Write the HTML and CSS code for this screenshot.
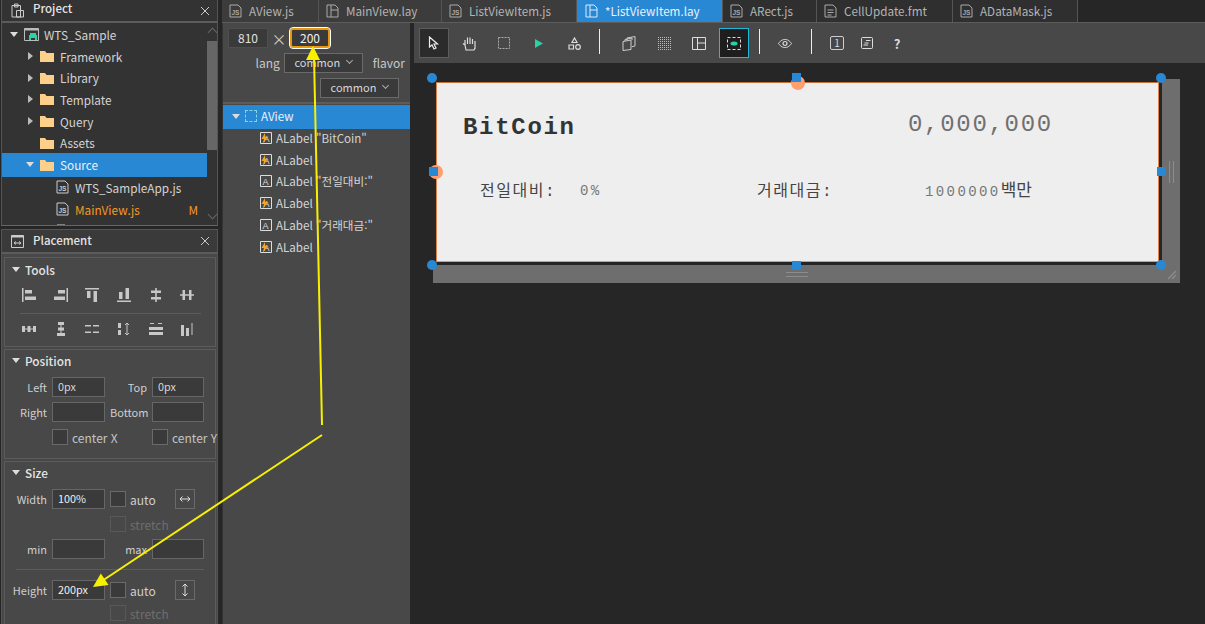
FILE: index.html
```html
<!DOCTYPE html>
<html lang="ko">
<head>
<meta charset="UTF-8">
<meta name="viewport" content="width=device-width, initial-scale=1.0">
<title>ListViewItem.lay</title>
<link rel="stylesheet" href="styles.css">
</head>
<body>
<svg class="defs" width="0" height="0">
    <symbol id="i-folder" viewBox="0 0 14 12"><path d="M0 1h5l1.500 2H14v9H0z" fill="#fcd08a"/></symbol>
    <symbol id="i-file" viewBox="0 0 13 14"><path d="M1 1h8l3 3v9H1z" fill="none" stroke="currentColor"/></symbol>
    <symbol id="i-lay" viewBox="0 0 13 14"><path d="M1 1h8l3 3v9H1zM5 1v12M5 6h7" fill="none" stroke="currentColor"/></symbol>
    <symbol id="i-fmt" viewBox="0 0 13 14"><path d="M1 1h8l3 3v9H1zM3.500 6h6M3.500 8.500h6M3.500 11h4" fill="none" stroke="currentColor"/></symbol>
    <symbol id="i-box" viewBox="0 0 12 12"><path d="M.5.500h11v11H.5z" fill="none" stroke="#ddd"/></symbol>
    <symbol id="i-bolt" viewBox="0 0 12 12"><path d="M5 1 1.500 7h2.500l-1 4.500L8 5H5.200z" fill="#f5a623"/></symbol>
    <symbol id="i-align" viewBox="0 0 14 14">
        <path d="M0 0h1.500v14H0zM3 2h7v3.500H3zM3 8.500h11V12H3z" fill="#c8c8c8"/>
    </symbol>
    <symbol id="i-mid" viewBox="0 0 14 14">
        <path d="M6.200 0h1.600v14H6.200zM2 2.500h10v2.500H2zM2 9h10v2.500H2z" fill="#c8c8c8"/>
    </symbol>
    <pattern id="dots" width="2" height="2" patternUnits="userSpaceOnUse"><rect width="1" height="1" fill="#bbb"/></pattern>
</svg>

<div class="app">
    <aside class="side">
        <section class="panel project">
            <header class="panel-head">
                <svg class="head-icon" width="13" height="15" viewBox="0 0 13 15"><path d="M1 2.500h8.500V14H1zM3.500 1h3.500v3H3.500zM5.500 7.500h7V14h-7z" fill="#333" stroke="#ccc"/></svg>
                <span class="panel-title">Project</span>
                <svg class="close" width="10" height="10" viewBox="0 0 10 10"><path d="M1 1l8 8M9 1l-8 8" stroke="#ccc"/></svg>
            </header>
            <div class="tree-wrap">
                <ul class="tree">
                    <li class="node">
                        <i class="tri open"></i>
                        <svg class="node-icon" width="15" height="13" viewBox="0 0 15 13"><path d="M.5.500h14v12H.5z" fill="none" stroke="#bbb"/><path d="M.5.500h14v2H.5z" fill="#bbb"/><path d="M5 12V7h1V5h6v2h1v5h-2v-2H7v2z" fill="#2dcfa5"/></svg>
                        WTS_Sample
                    </li>
                    <li class="node lvl1"><i class="tri closed"></i><svg class="node-icon" width="14" height="12"><use href="#i-folder"/></svg>Framework</li>
                    <li class="node lvl1"><i class="tri closed"></i><svg class="node-icon" width="14" height="12"><use href="#i-folder"/></svg>Library</li>
                    <li class="node lvl1"><i class="tri closed"></i><svg class="node-icon" width="14" height="12"><use href="#i-folder"/></svg>Template</li>
                    <li class="node lvl1"><i class="tri closed"></i><svg class="node-icon" width="14" height="12"><use href="#i-folder"/></svg>Query</li>
                    <li class="node lvl1"><i class="tri none"></i><svg class="node-icon" width="14" height="12"><use href="#i-folder"/></svg>Assets</li>
                    <li class="node lvl1 selected"><i class="tri open"></i><svg class="node-icon" width="14" height="12"><use href="#i-folder"/></svg>Source</li>
                    <li class="node lvl2"><svg class="node-icon js" width="13" height="14"><use href="#i-file"/><text x="2.500" y="11" class="js-text">JS</text></svg>WTS_SampleApp.js</li>
                    <li class="node lvl2 modified"><svg class="node-icon js" width="13" height="14"><use href="#i-file"/><text x="2.500" y="11" class="js-text">JS</text></svg>MainView.js<span class="flag">M</span></li>
                    <li class="node lvl2"><svg class="node-icon js" width="13" height="14"><use href="#i-file"/></svg></li>
                </ul>
                <div class="scrollbar"><div class="thumb"></div></div>
            </div>
        </section>

        <section class="panel placement">
            <header class="panel-head">
                <svg class="head-icon" width="13" height="13" viewBox="0 0 13 13"><path d="M.5.500h12v12H.5z" fill="none" stroke="#ccc"/><path d="M.5.500h12v2H.5z" fill="#ccc"/><path d="M3 8h7M3 8l2-1.500M3 8l2 1.500M10 8 8 6.500M10 8 8 9.500" stroke="#ccc" fill="none"/></svg>
                <span class="panel-title">Placement</span>
                <svg class="close" width="10" height="10" viewBox="0 0 10 10"><path d="M1 1l8 8M9 1l-8 8" stroke="#ccc"/></svg>
            </header>

            <div class="group tools">
                <h3 class="group-title"><i class="tri open"></i>Tools</h3>
                <div class="tool-grid">
                    <svg width="14" height="14"><use href="#i-align"/></svg>
                    <svg class="flip-x" width="14" height="14"><use href="#i-align"/></svg>
                    <svg class="turn" width="14" height="14"><use href="#i-align"/></svg>
                    <svg class="turn-b" width="14" height="14"><use href="#i-align"/></svg>
                    <svg width="14" height="14"><use href="#i-mid"/></svg>
                    <svg class="turn-m" width="14" height="14"><use href="#i-mid"/></svg>
                </div>
                <hr class="rule tool-rule">
                <div class="tool-grid">
                    <svg width="14" height="14" viewBox="0 0 14 14"><path d="M0 4h3v6H0zM5.500 4h3v6h-3zM11 4h3v6h-3zM3 6.500h8v1H3z" fill="#c8c8c8"/></svg>
                    <svg width="14" height="14" viewBox="0 0 14 14"><path d="M4 0h6v3H4zM4 5.500h6v3H4zM3 11h8v3H3zM6.500 3h1v8h-1z" fill="#c8c8c8"/></svg>
                    <svg width="14" height="14" viewBox="0 0 14 14"><path d="M0 3h6v1.500H0zM8 3h6v1.500H8zM0 9.500h6V11H0zM8 9.500h6V11H8z" fill="#c8c8c8"/></svg>
                    <svg width="14" height="14" viewBox="0 0 14 14"><path d="M1 1h3v5H1zM1 8h3v5H1z" fill="#c8c8c8"/><path d="M10 1v12M8 3l2-2 2 2M8 11l2 2 2-2" fill="none" stroke="#c8c8c8"/></svg>
                    <svg width="14" height="14" viewBox="0 0 14 14"><path d="M1 1.500h4M9 1.500h4" stroke="#c8c8c8"/><path d="M0 5h14v3H0zM0 10h14v3H0z" fill="#c8c8c8"/></svg>
                    <svg width="14" height="14" viewBox="0 0 14 14"><path d="M1 3h3v11H1zM6 6h3v8H6z" fill="#c8c8c8"/><path d="M12 1v12" stroke="#c8c8c8"/></svg>
                </div>
            </div>

            <div class="group position">
                <h3 class="group-title"><i class="tri open"></i>Position</h3>
                <div class="fields">
                    <label class="lbl">Left</label><div class="input">0px</div>
                    <label class="lbl">Top</label><div class="input">0px</div>
                    <label class="lbl">Right</label><div class="input"></div>
                    <label class="lbl">Bottom</label><div class="input"></div>
                    <span></span><div class="check-line"><i class="check"></i>center X</div>
                    <span></span><div class="check-line"><i class="check"></i>center Y</div>
                </div>
            </div>

            <div class="group size">
                <h3 class="group-title"><i class="tri open"></i>Size</h3>
                <div class="fields">
                    <label class="lbl">Width</label><div class="input bright">100%</div>
                    <div class="auto-line"><i class="check"></i>auto
                        <span class="mini-btn"><svg width="12" height="8" viewBox="0 0 12 8"><path d="M1 4h10M1 4l2.500-2.500M1 4l2.500 2.500M11 4 8.500 1.500M11 4 8.500 6.500" stroke="#ddd" fill="none"/></svg></span>
                    </div>
                    <div class="auto-line off"><i class="check"></i>stretch</div>
                    <label class="lbl">min</label><div class="input"></div>
                    <label class="lbl">max</label><div class="input"></div>
                </div>
                <hr class="rule size-rule">
                <div class="fields">
                    <label class="lbl">Height</label><div class="input bright">200px</div>
                    <div class="auto-line"><i class="check"></i>auto
                        <span class="mini-btn"><svg width="8" height="14" viewBox="0 0 8 14"><path d="M4 1v12M4 1 1.500 3.500M4 1l2.500 2.500M4 13l-2.500-2.500M4 13l2.500-2.500" stroke="#ddd" fill="none"/></svg></span>
                    </div>
                    <div class="auto-line off tail"><i class="check"></i>stretch</div>
                </div>
            </div>
        </section>
    </aside>

    <main class="main">
        <nav class="tabs">
            <div class="tab w97"><svg width="13" height="14"><use href="#i-file"/><text x="2.500" y="11" class="js-text">JS</text></svg>AView.js</div>
            <div class="tab w123"><svg width="13" height="14"><use href="#i-lay"/></svg>MainView.lay</div>
            <div class="tab w135"><svg width="13" height="14"><use href="#i-file"/><text x="2.500" y="11" class="js-text">JS</text></svg>ListViewItem.js</div>
            <div class="tab w146 active"><svg width="13" height="14"><use href="#i-lay"/></svg>*ListViewItem.lay</div>
            <div class="tab w94 dim"><svg width="13" height="14"><use href="#i-file"/><text x="2.500" y="11" class="js-text">JS</text></svg>ARect.js</div>
            <div class="tab w136 dim"><svg width="13" height="14"><use href="#i-fmt"/></svg>CellUpdate.fmt</div>
            <div class="tab w125 dim"><svg width="13" height="14"><use href="#i-file"/><text x="2.500" y="11" class="js-text">JS</text></svg>ADataMask.js</div>
        </nav>

        <div class="workspace">
            <div class="outline">
                <div class="size-bar">
                    <div class="dim-box">810</div>
                    <span class="times">×</span>
                    <div class="dim-box focus">200</div>
                </div>
                <div class="lang-row">
                    <span>lang</span>
                    <div class="select w79">common<i class="chev"></i></div>
                    <span class="flavor">flavor</span>
                </div>
                <div class="lang-row second">
                    <div class="select w79">common<i class="chev"></i></div>
                </div>
                <ul class="view-tree">
                    <li class="view-root"><i class="tri open"></i><i class="dash"></i>AView</li>
                    <li class="view-node"><svg width="12" height="12"><use href="#i-box"/><text x="3.500" y="9.500" class="a-text">A</text><use href="#i-bolt"/></svg>ALabel "BitCoin"</li>
                    <li class="view-node"><svg width="12" height="12"><use href="#i-box"/><text x="3.500" y="9.500" class="a-text">A</text><use href="#i-bolt"/></svg>ALabel</li>
                    <li class="view-node"><svg width="12" height="12"><use href="#i-box"/><text x="2.500" y="9.500" class="a-text">A</text></svg>ALabel "전일대비:"</li>
                    <li class="view-node"><svg width="12" height="12"><use href="#i-box"/><text x="3.500" y="9.500" class="a-text">A</text><use href="#i-bolt"/></svg>ALabel</li>
                    <li class="view-node"><svg width="12" height="12"><use href="#i-box"/><text x="2.500" y="9.500" class="a-text">A</text></svg>ALabel "거래대금:"</li>
                    <li class="view-node"><svg width="12" height="12"><use href="#i-box"/><text x="3.500" y="9.500" class="a-text">A</text><use href="#i-bolt"/></svg>ALabel</li>
                </ul>
            </div>

            <div class="design">
                <div class="toolbar">
                    <button class="tool pressed"><svg width="12" height="14" viewBox="0 0 12 14"><path d="M1.500 1v10l2.500-2 2 4 2-1-2-4h3.500z" fill="none" stroke="#eee" stroke-width="1.200"/></svg></button>
                    <button class="tool"><svg width="14" height="15" viewBox="0 0 14 15"><path d="M3 9V4M5.500 8V1.500M8 8V1.500M10.500 8V3M13 13V5M3 9 1 7.500M3 9l1 5h8l1-2" fill="none" stroke="#ddd" stroke-width="1.200"/></svg></button>
                    <button class="tool"><svg width="12" height="12"><rect x=".5" y=".5" width="11" height="11" fill="none" stroke="#aaa" stroke-dasharray="2 1"/></svg></button>
                    <button class="tool"><svg width="8" height="9" viewBox="0 0 8 9"><path d="M0 0l8 4.500L0 9z" fill="#2dcfa5"/></svg></button>
                    <button class="tool"><svg width="13" height="13" viewBox="0 0 13 13"><path d="M6.500 1 9 5.500H4z" fill="none" stroke="#ddd" stroke-width="1.200"/><path d="M1 8h4.500v4H1z" fill="none" stroke="#ddd" stroke-width="1.200"/><circle cx="10" cy="10" r="2.300" fill="none" stroke="#ddd" stroke-width="1.200"/></svg></button>
                    <i class="sep first"></i>
                    <button class="tool"><svg width="14" height="15" viewBox="0 0 14 15"><path d="M5 4v-2l8-1.500v9.500l-3 .7M3 5V3.500l7-1.500v2" fill="none" stroke="#ccc"/><path d="M1 5.500 9 4v9.500L1 14.500z" fill="none" stroke="#ccc"/></svg></button>
                    <button class="tool"><svg width="13" height="13"><rect width="13" height="13" fill="url(#dots)"/></svg></button>
                    <button class="tool"><svg width="14" height="13" viewBox="0 0 14 13"><path d="M.5.500h13v12H.5zM5.500.500v12M5.500 6h8" fill="none" stroke="#ddd"/></svg></button>
                    <button class="tool active"><svg width="14" height="13" viewBox="0 0 14 13"><rect x=".5" y=".5" width="13" height="12" fill="none" stroke="#ddd" stroke-dasharray="3 2"/><ellipse cx="7" cy="6.500" rx="3.500" ry="2" fill="#2dcfa5"/></svg></button>
                    <i class="sep"></i>
                    <button class="tool"><svg width="14" height="9" viewBox="0 0 14 9"><path d="M.5 4.500C3 1 5 .5 7 .5s4 .5 6.500 4C11 8 9 8.500 7 8.500S3 8 .5 4.500z" fill="none" stroke="#ddd"/><circle cx="7" cy="4.500" r="2" fill="none" stroke="#ddd" stroke-width="1.200"/></svg></button>
                    <i class="sep wide"></i>
                    <button class="tool tight"><span class="one">1</span></button>
                    <button class="tool tight"><svg width="12" height="12" viewBox="0 0 12 12"><rect x=".5" y=".5" width="11" height="11" rx="1" fill="none" stroke="#ddd"/><path d="M5 3.500h4.500M2.500 8H7M3.500 6h4" stroke="#ddd" fill="none"/></svg></button>
                    <button class="tool tight"><span class="help">?</span></button>
                </div>

                <div class="stage">
                    <div class="surface">
                        <div class="surface-inset">
                            <div class="sheet">
                                <span class="txt title">BitCoin</span>
                                <span class="txt price">0,000,000</span>
                                <span class="txt cap c1">전일대비:</span>
                                <span class="txt val v1">0%</span>
                                <span class="txt cap c2">거래대금:</span>
                                <span class="txt val v2">1000000<b>백만</b></span>
                            </div>
                            <i class="anchor a-top"></i>
                            <i class="anchor a-left"></i>
                            <i class="handle h-tl"></i>
                            <i class="handle h-tr"></i>
                            <i class="handle h-bl"></i>
                            <i class="handle h-br"></i>
                            <i class="handle sq s-t"></i>
                            <i class="handle sq s-l"></i>
                            <i class="handle sq s-r"></i>
                            <i class="handle sq s-b"></i>
                        </div>
                        <i class="grip g-right"></i>
                        <i class="grip g-bottom"></i>
                        <svg class="grip-corner" width="10" height="10" viewBox="0 0 10 10"><path d="M1 9 9 1M5 9 9 5" stroke="#8c8c8c" stroke-width="1.500"/></svg>
                    </div>
                </div>
            </div>
        </div>
    </main>
</div>

<svg class="arrows" width="1205" height="624" viewBox="0 0 1205 624">
    <path d="M322 425 314 56M322 435 102 581" stroke="#f8f000" stroke-width="2" fill="none"/>
    <path d="M313 46 306 60 320 60z" fill="#f8f000"/>
    <path d="M93 587 100.800 573.500 108.600 585.100z" fill="#f8f000"/>
</svg>
</body>
</html>
```

FILE: styles.css
```css
* {
    box-sizing: border-box;
}

body {
    margin: 0;
    width: 1205px;
    height: 624px;
    overflow: hidden;
    position: relative;
    background-color: #262626;
    color: #d4d4d4;
    font-family: "Noto Sans CJK KR", "Noto Sans", sans-serif;
    font-size: 12px;
}

.defs {
    position: absolute;
}

.js-text {
    font-family: "Liberation Sans", sans-serif;
    font-size: 6.500px;
    font-weight: 700;
    fill: currentColor;
}

.a-text {
    font-family: "Liberation Sans", sans-serif;
    font-size: 9px;
    fill: #ddd;
}

ul {
    list-style: none;
    margin: 0;
    padding: 0;
}

.app {
    display: flex;
    height: 624px;
}

/* left column */
.side {
    width: 218px;
    flex: none;
    display: flex;
    flex-direction: column;
}

.panel {
    border-left: 1px solid #555;
    border-right: 1px solid #555;
    margin-left: 1px;
}

.project {
    height: 226px;
    display: flex;
    flex-direction: column;
    border-bottom: 1px solid #666;
    background-color: #333;
}

.placement {
    margin-top: 3px;
    flex: 1;
    background-color: #484848;
    border-top: 1px solid #555;
}

.panel-head {
    height: 24px;
    flex: none;
    display: flex;
    align-items: center;
    padding-left: 9px;
    background-color: #3a3a3a;
    border-bottom: 2px solid #5c5c5c;
}

.project .panel-head {
    height: 23px;
    background-color: #333;
}

.panel-title {
    margin-left: 9px;
    margin-top: -2px;
    font-size: 11.500px;
    color: #e4e4e4;
    font-weight: 500;
    flex: 1;
}

.project .panel-title {
    margin-top: -6px;
}

.close {
    margin-right: 7px;
}

.tree-wrap {
    flex: 1;
    display: flex;
    min-height: 0;
    overflow: hidden;
}

.tree {
    flex: 1;
    padding-top: .500px;
}

.node {
    height: 21.700px;
    display: flex;
    align-items: center;
    font-size: 11.800px;
    padding-left: 8px;
    color: #d4d4d4;
    white-space: nowrap;
}

.node-icon {
    margin: 0 5px 0 6px;
    flex: none;
}

.lvl1 {
    padding-left: 24px;
}

.lvl1 .node-icon {
    margin: 0 6px 0 6px;
}

.lvl2 {
    padding-left: 48px;
}

.lvl2 .node-icon {
    margin: 0 6px 0 6px;
}

.js {
    color: #ccc;
}

.selected {
    height: 24px;
    margin-top: -1px;
    background-color: #2888d4;
    color: #e8f2fa;
}

.modified {
    color: #f59a23;
}

.flag {
    margin-left: auto;
    margin-right: 9px;
}

.scrollbar {
    position: relative;
    width: 10px;
    flex: none;
    padding-top: 18px;
    background-color: #333;
}

.scrollbar::before,
.scrollbar::after {
    content: "";
    position: absolute;
    left: 2px;
    width: 6px;
    height: 6px;
    border-left: 1px solid #666;
    border-top: 1px solid #666;
    transform: rotate(45deg);
}

.scrollbar::before {
    top: 6px;
}

.scrollbar::after {
    bottom: 7px;
    transform: rotate(225deg);
}

.thumb {
    height: 109px;
    background-color: #666;
}

/* triangles */
.tri {
    display: inline-block;
    width: 0;
    height: 0;
    flex: none;
}

.tri.open {
    border-left: 4px solid transparent;
    border-right: 4px solid transparent;
    border-top: 5px solid #ddd;
}

.tri.closed {
    margin-left: 2px;
    margin-right: 1px;
    border-top: 4px solid transparent;
    border-bottom: 4px solid transparent;
    border-left: 5px solid #bbb;
}

.tri.none {
    width: 8px;
}

/* property groups */
.group {
    margin: 3px 0 0 2px;
    width: 212px;
    border: 1px solid #5c5c5c;
}

.group-title {
    margin: 0;
    height: 22px;
    display: flex;
    align-items: center;
    gap: 5px;
    padding-left: 7px;
    padding-bottom: 2px;
    font-size: 11.800px;
    font-weight: 500;
    color: #e4e4e4;
}

.tools {
    height: 90px;
}

.tools .group-title {
    height: 24px;
}

.tool-grid {
    display: grid;
    grid-template-columns: repeat(6, 31.700px);
    padding-left: 8px;
    justify-items: center;
    align-items: center;
    margin-top: 4px;
    height: 18px;
}

.tool-rule {
    margin: 9px 14px 0 15px;
}

.tool-rule + .tool-grid {
    margin-top: 6px;
}

.rule {
    border: none;
    border-top: 1px solid #5c5c5c;
}

.flip-x {
    transform: scaleX(-1);
}

.turn {
    transform: rotate(90deg) scaleY(-1);
}

.turn-b {
    transform: rotate(-90deg);
}

.turn-m {
    transform: rotate(90deg);
}

.position {
    height: 110px;
    margin-top: 2px;
}

.position .group-title,
.size .group-title {
    margin-bottom: 5px;
}

.size {
    height: 170px;
    margin-top: 2px;
}

.fields {
    display: grid;
    grid-template-columns: 42px 53px 37px 52px;
    column-gap: 5px;
    row-gap: 5px;
    grid-auto-rows: 20px;
    align-items: center;
}

.size .fields {
    row-gap: 7px;
    grid-auto-rows: auto;
}

.size-rule {
    margin: 10px 11px 10px 11px;
}

.lbl {
    text-align: right;
    white-space: nowrap;
    font-size: 11px;
    color: #cfcfcf;
}

.input {
    height: 20px;
    line-height: 17px;
    padding-left: 5px;
    background-color: #3a3a3a;
    border: 1px solid #666;
    font-size: 10.800px;
    color: #d8d8d8;
}

.bright {
    color: #f0f0f0;
}

.check {
    display: inline-block;
    width: 16px;
    height: 16px;
    flex: none;
    background-color: #3a3a3a;
    border: 1px solid #6a6a6a;
}

.check-line {
    display: flex;
    align-items: center;
    gap: 4px;
    white-space: nowrap;
    color: #c4c4c4;
}

.auto-line {
    grid-column: 3 / 5;
    display: flex;
    align-items: center;
    gap: 4px;
    color: #d0d0d0;
    height: 20px;
}

.auto-line.off {
    grid-column: 3 / 5;
    height: 16px;
    color: #6e6e6e;
}

.auto-line.tail {
    margin-top: -2px;
}

.auto-line.off .check {
    background-color: transparent;
    border-color: #585858;
}

.mini-btn {
    width: 20px;
    height: 20px;
    margin-left: auto;
    margin-right: 9px;
    display: flex;
    align-items: center;
    justify-content: center;
    border: 1px solid #6a6a6a;
}

/* tabs */
.main {
    flex: 1;
    min-width: 0;
    margin-left: 4px;
    display: flex;
    flex-direction: column;
}

.tabs {
    height: 23px;
    flex: none;
    display: flex;
    border-bottom: 1px solid #5c5c5c;
}

.tab {
    display: flex;
    align-items: center;
    gap: 7px;
    padding-left: 7px;
    padding-bottom: 1px;
    font-size: 11.700px;
    background-color: #3c3c3c;
    color: #b4b4b4;
    border-right: 1px solid #555;
}

.dim {
    background-color: #2f2f2f;
}

.tab svg {
    color: #aaa;
    flex: none;
}

.tab.active {
    background-color: #2888d4;
    color: #eaf3fb;
    padding-left: 8px;
}

.tab.active svg {
    color: #dcecf9;
}

.w97 { width: 97px; }
.w123 { width: 123px; }
.w135 { width: 135px; }
.w146 { width: 146px; }
.w94 { width: 94px; }
.w136 { width: 136px; }
.w125 { width: 125px; }

.workspace {
    flex: 1;
    display: flex;
    min-height: 0;
}

/* outline column */
.outline {
    width: 188px;
    flex: none;
    background-color: #484848;
    border-left: 1px solid #333;
}

.size-bar {
    display: flex;
    align-items: center;
    height: 20px;
    margin: 5px 0 0 5px;
}

.dim-box {
    width: 40px;
    height: 20px;
    text-align: center;
    background-color: #3a3a3a;
    border: 1px solid #4e4e4e;
    line-height: 18px;
    color: #e0e0e0;
}

.dim-box.focus {
    height: 20px;
    line-height: 16px;
    border: 2px solid #e8980c;
    border-radius: 3px;
    outline: 1px solid #fff;
    color: #f0f0f0;
}

.times {
    width: 22px;
    text-align: center;
    font-size: 15px;
    color: #ccc;
}

.lang-row {
    display: flex;
    align-items: center;
    justify-content: flex-end;
    height: 20px;
    margin-top: 5px;
    padding-right: 5px;
    gap: 4px;
    color: #c8c8c8;
}

.lang-row span {
    padding-bottom: 2px;
}

.flavor {
    margin-left: 6px;
}

.lang-row.second {
    padding-right: 11px;
}

.select {
    height: 20px;
    padding-bottom: 2px;
    display: flex;
    align-items: center;
    justify-content: center;
    gap: 7px;
    background-color: #3a3a3a;
    border: 1px solid #6a6a6a;
    font-size: 11px;
    color: #d8d8d8;
}

.w79 {
    width: 79px;
}

.chev {
    width: 5px;
    height: 5px;
    margin-top: -3px;
    border-right: 1px solid #aaa;
    border-bottom: 1px solid #aaa;
    transform: rotate(45deg);
}

.view-tree {
    margin-top: 4px;
    border-top: 2px solid #5c5c5c;
    padding-top: 1px;
}

.view-root {
    height: 24px;
    display: flex;
    align-items: center;
    padding-left: 9px;
    padding-bottom: 2px;
    gap: 4px;
    font-size: 11.600px;
    background-color: #2888d4;
    color: #e8f2fa;
}

.dash {
    width: 12px;
    height: 12px;
    margin-left: 1px;
    border: 1px dashed #7fd8e8;
}

.view-node {
    height: 21.800px;
    display: flex;
    align-items: center;
    gap: 4px;
    padding-left: 37px;
    white-space: nowrap;
    font-size: 11.600px;
    color: #d4d4d4;
}

.view-root + .view-node {
    margin-top: -2px;
}

/* design area */
.design {
    flex: 1;
    min-width: 0;
    margin-left: 4px;
    display: flex;
    flex-direction: column;
}

.toolbar {
    height: 40px;
    flex: none;
    display: flex;
    align-items: center;
    gap: 5px;
    padding-left: 5px;
    background-color: #484848;
}

.tool {
    width: 30px;
    height: 30px;
    flex: none;
    padding: 0;
    display: flex;
    align-items: center;
    justify-content: center;
    background: transparent;
    border: 1px solid transparent;
    font-family: inherit;
}

.tool.pressed {
    background-color: #2b2b2b;
    border-color: #5c5c5c;
}

.tool.active {
    background-color: #1e1e1e;
    border-color: #22b8dc;
}

.tool.tight {
    margin-right: -5px;
}

.sep {
    width: 1px;
    height: 25px;
    margin: -4px 5px 0;
    background-color: #eee;
    flex: none;
}

.sep.first {
    margin: -4px 9px 0 5px;
}

.sep.wide {
    margin-left: 6px;
}

.one {
    width: 14px;
    height: 14px;
    line-height: 12px;
    border: 1px solid #ccc;
    border-radius: 2px;
    color: #ddd;
    font-size: 10px;
    text-align: center;
}

.help {
    color: #ddd;
    font-size: 13px;
    font-weight: 700;
}

.stage {
    flex: 1;
    padding: 16px 0 0 19px;
}

/* form being edited, a free canvas */
.surface {
    position: relative;
    width: 747px;
    height: 204px;
    background-color: #6e6e6e;
}

.surface-inset {
    position: relative;
    width: 729px;
    height: 186px;
    background-color: #262626;
    padding: 3px 0 0 3px;
}

.sheet {
    position: relative;
    width: 723px;
    height: 180px;
    background-color: #eee;
    border: 1px solid #e0824c;
    border-top-color: #c8703c;
    border-bottom-color: #f0926a;
}

.txt {
    position: absolute;
    white-space: nowrap;
    font-family: "Liberation Mono", "Noto Sans CJK KR", monospace;
    color: #333;
}

.title {
    left: 26px;
    top: 31px;
    font-size: 24px;
    font-weight: 700;
    letter-spacing: 1.700px;
}

.price {
    left: 471px;
    top: 28px;
    font-size: 24px;
    letter-spacing: 1.700px;
    color: #707070;
}

.cap {
    top: 94px;
    font-size: 16px;
    letter-spacing: 1.500px;
    color: #444;
}

.c1 { left: 43px; }
.c2 { left: 320px; }

.val {
    font-size: 14px;
    letter-spacing: 2.400px;
    color: #777;
}

.val b {
    font-size: 17px;
    font-weight: 400;
    letter-spacing: 0;
    color: #444;
}

.v1 { left: 143px; top: 100px; }
.v2 { left: 488px; top: 93px; }

.anchor {
    position: absolute;
    width: 14px;
    height: 14px;
    border-radius: 50%;
    background-color: #ff9e6e;
}

.a-top { left: 358px; top: -3px; }
.a-left { left: -4px; top: 86px; }

.handle {
    position: absolute;
    width: 10px;
    height: 10px;
    border-radius: 50%;
    background-color: #2888d4;
}

.handle.sq {
    border-radius: 0;
    width: 9px;
    height: 9px;
}

.h-tl { left: -6px; top: -6px; }
.h-tr { left: 723px; top: -6px; }
.h-bl { left: -6px; top: 181px; }
.h-br { left: 723px; top: 181px; }
.s-t { left: 359px; top: -6px; }
.s-l { left: -4px; top: 88px; }
.s-r { left: 724px; top: 88px; }
.s-b { left: 359px; top: 182px; }

.grip {
    position: absolute;
}

.g-right {
    left: 736px;
    top: 82px;
    width: 5px;
    height: 22px;
    border-left: 1px solid #8c8c8c;
    border-right: 1px solid #8c8c8c;
}

.g-bottom {
    left: 353px;
    top: 193px;
    width: 22px;
    height: 5px;
    border-top: 1px solid #8c8c8c;
    border-bottom: 1px solid #8c8c8c;
}

.grip-corner {
    position: absolute;
    right: 3px;
    bottom: 3px;
}

.arrows {
    position: absolute;
    left: 0;
    top: 0;
    pointer-events: none;
}
```
